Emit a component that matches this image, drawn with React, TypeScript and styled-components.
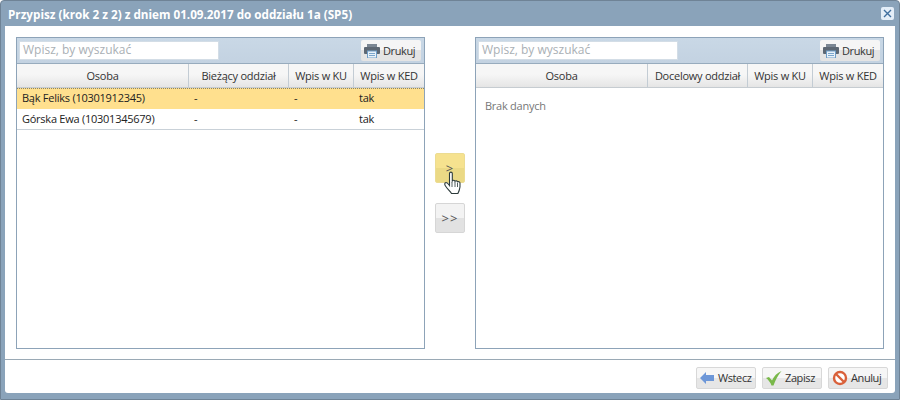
import React from "react";
import styled, { createGlobalStyle } from "styled-components";

const Global = createGlobalStyle`
  html, body { margin: 0; padding: 0; background: #fff; }
  body { font-family: "Open Sans", "Noto Sans", "Liberation Sans", sans-serif; font-size: 11px; letter-spacing: -0.25px; color: #333; }
`;

const Win = styled.div`
  width: 900px; height: 400px; box-sizing: border-box; background: #8aa3ba;
  border: 1px solid #6f8396; border-radius: 4px 4px 0 0;
  display: flex; flex-direction: column; padding: 0 4px 6px 4px;
`;
const TitleBar = styled.div`
  height: 25px; flex: none; display: flex; align-items: center; justify-content: space-between;
  padding: 0 1px 0 3px; color: #fff; font-weight: 700; font-size: 11.7px; letter-spacing: 0;
`;
const CloseBtn = styled.div`
  width: 13px; height: 13px; background: #e4eef8; border-radius: 2px; display: flex;
  align-items: center; justify-content: center;
`;
const Content = styled.div`
  flex: 1; background: #fff; display: flex; flex-direction: column; min-height: 0; border-radius: 0 0 3px 3px;
`;
const Main = styled.div`
  height: 334px; flex: none; box-sizing: border-box; padding: 11px 10px 10px 11px;
  display: flex; border-bottom: 1px solid #9aa9b5;
`;
const Panel = styled.div`
  width: 409px; flex: none; box-sizing: border-box; border: 1px solid #8da3b8; display: flex; flex-direction: column;
`;
const Toolbar = styled.div`
  height: 26px; flex: none; box-sizing: border-box; background: linear-gradient(#c9d8e6, #c3d2e1);
  display: flex; align-items: center; justify-content: space-between; padding: 0 3px 0 2px;
  border-bottom: 1px solid #97abbd;
`;
const Search = styled.div`
  width: 200px; height: 19px; box-sizing: border-box; background: #fff; border: 1px solid #d3dde6;
  color: #aab0b5; font-size: 12px; line-height: 16px; padding-left: 3px; letter-spacing: 0;
`;
const PrintBtn = styled.div`
  width: 60px; height: 21px; box-sizing: border-box; background: linear-gradient(#f5f5f5 50%, #e4e4e4 50%);
  display: flex; align-items: center; gap: 3px; padding-left: 3px; border-radius: 2px; font-size: 11px; letter-spacing: -0.4px; color: #333;
`;
const HeadRow = styled.div`
  height: 24px; flex: none; box-sizing: border-box; display: flex; background: linear-gradient(#f6f6f6 45%, #e5e5e5);
  border-bottom: 1px solid #c6ccd1;
`;
const HeadCell = styled.div<{ $w: number }>`
  width: ${p => p.$w}px; flex: none; box-sizing: border-box; display: flex; align-items: center; justify-content: center;
  border-right: 1px solid #c3ccd4; color: #333;
  &:last-child { border-right: none; flex: 1; }
`;
const Row = styled.div<{ $sel?: boolean }>`
  height: 21px; flex: none; box-sizing: border-box; display: flex; align-items: center; padding-bottom: 2px;
  background: ${p => (p.$sel ? "#ffe08e" : "#fff")};
  border-top: ${p => (p.$sel ? "1px dotted #8a8468" : "none")};
  border-bottom: 1px solid ${p => (p.$sel ? "#ffe08e" : "#c9d1d8")};
  color: #222;
`;
const Cell = styled.div<{ $w: number }>`
  width: ${p => p.$w}px; flex: none; box-sizing: border-box; padding-left: 5px; white-space: nowrap;
`;
const Empty = styled.div`
  padding: 10px 9px; color: #777;
`;
const Middle = styled.div`
  width: 50px; flex: none; display: flex; flex-direction: column; align-items: center; padding-top: 116px; gap: 20px;
`;
const Move = styled.div<{ $hover?: boolean }>`
  position: relative; width: 30px; height: 30px; box-sizing: border-box; border-radius: 2px;
  display: flex; align-items: center; justify-content: center; color: #555; font-size: 13px; letter-spacing: 1px;
  background: ${p => p.$hover
    ? "linear-gradient(#f6e28f 50%, #ebd985 50%)"
    : "linear-gradient(#f3f3f3 50%, #e2e2e2 50%)"};
  border: 1px solid ${p => (p.$hover ? "#ecdc92" : "#d6d6d6")};
`;
const Hand = styled.svg`
  position: absolute; left: 8px; top: 17px;
`;
const Footer = styled.div`
  flex: 1; display: flex; justify-content: flex-end; align-items: center; gap: 6px; padding: 2px 7px 0 0;
`;
const FootBtn = styled.div<{ $w: number }>`
  width: ${p => p.$w}px; height: 22px; box-sizing: border-box; border: 1px solid #d8d8d8; border-radius: 2px;
  background: linear-gradient(#f6f6f6 50%, #e6e6e6 50%); display: flex; align-items: center; gap: 3px; padding-left: 3px;
  color: #333; letter-spacing: -0.4px;
`;

const Printer = () => (
  <svg width="16" height="14" viewBox="0 0 16 14">
    <rect x="3" y="0" width="10" height="3" fill="#7b8794" />
    <rect x="0" y="3" width="16" height="7" rx="1" fill="#5d6874" />
    <rect x="3.5" y="7" width="9" height="7" fill="#e9f1f8" stroke="#6f9ec8" strokeWidth="1" />
    <path d="M5 9.5h6M5 11.5h6" stroke="#7aa6cc" />
  </svg>
);

const cols = [172, 100, 65, 70];

const Left = () => (
  <Panel>
    <Toolbar>
      <Search>Wpisz, by wyszukać</Search>
      <PrintBtn><Printer />Drukuj</PrintBtn>
    </Toolbar>
    <HeadRow>
      <HeadCell $w={cols[0]}>Osoba</HeadCell>
      <HeadCell $w={cols[1]}>Bieżący oddział</HeadCell>
      <HeadCell $w={cols[2]}>Wpis w KU</HeadCell>
      <HeadCell $w={cols[3]}>Wpis w KED</HeadCell>
    </HeadRow>
    <Row $sel>
      <Cell $w={cols[0]}>Bąk Feliks (10301912345)</Cell>
      <Cell $w={cols[1]}>-</Cell>
      <Cell $w={cols[2]}>-</Cell>
      <Cell $w={cols[3]}>tak</Cell>
    </Row>
    <Row>
      <Cell $w={cols[0]}>Górska Ewa (10301345679)</Cell>
      <Cell $w={cols[1]}>-</Cell>
      <Cell $w={cols[2]}>-</Cell>
      <Cell $w={cols[3]}>tak</Cell>
    </Row>
  </Panel>
);

const Right = () => (
  <Panel>
    <Toolbar>
      <Search>Wpisz, by wyszukać</Search>
      <PrintBtn><Printer />Drukuj</PrintBtn>
    </Toolbar>
    <HeadRow>
      <HeadCell $w={cols[0]}>Osoba</HeadCell>
      <HeadCell $w={cols[1]}>Docelowy oddział</HeadCell>
      <HeadCell $w={cols[2]}>Wpis w KU</HeadCell>
      <HeadCell $w={cols[3]}>Wpis w KED</HeadCell>
    </HeadRow>
    <Empty>Brak danych</Empty>
  </Panel>
);

export default function App() {
  return (
    <>
      <Global />
      <Win>
        <TitleBar>
          <span>Przypisz (krok 2 z 2) z dniem 01.09.2017 do oddziału 1a (SP5)</span>
          <CloseBtn>
            <svg width="9" height="9" viewBox="0 0 9 9">
              <path d="M1 1l7 7M8 1l-7 7" stroke="#3f6f9f" strokeWidth="1.4" />
            </svg>
          </CloseBtn>
        </TitleBar>
        <Content>
          <Main>
            <Left />
            <Middle>
              <Move $hover>
                &gt;
                <Hand width="18" height="24" viewBox="0 0 18 24">
                  <path
                    d="M5.500 2.500c0-1.800 2.800-1.800 2.800 0V10c.7-1 2.400-.9 2.700.3.700-.8 2.300-.6 2.600.6.700-.5 2.300-.2 2.400 1.100.2 2.600 0 5-.7 7-.4 1.500-1 2.500-1.400 3.500H7.500C6.200 20.500 3.500 18 1.500 15 .3 13.300.6 11.800 1.800 11.600c1-.2 2.500 1.200 3.700 2.900z"
                    fill="#fff"
                    stroke="#2c3a3a"
                    strokeWidth="1.100"
                  />
                  <path d="M8 11v5M11 11v5M13.500 12v4" stroke="#2c3a3a" strokeWidth="0.8" />
                </Hand>
              </Move>
              <Move>&gt;&gt;</Move>
            </Middle>
            <Right />
          </Main>
          <Footer>
            <FootBtn $w={60}>
              <svg width="15" height="12" viewBox="0 0 15 12">
                <path d="M0 6l6-6v3h8v6H6v3z" fill="#6d97d8" />
              </svg>
              Wstecz
            </FootBtn>
            <FootBtn $w={60}>
              <svg width="16" height="16" viewBox="0 0 16 16">
                <path d="M0 8l3-1 3 3.500C8 6 11 3 15.500 1 12 5 9.500 10 7.500 15.500H5.500C4.500 12.500 2.500 10 0 8z" fill="#79b84a" />
              </svg>
              Zapisz
            </FootBtn>
            <FootBtn $w={60}>
              <svg width="16" height="16" viewBox="0 0 16 16">
                <circle cx="8" cy="8" r="6" fill="#fff" stroke="#d9603a" strokeWidth="2.400" />
                <path d="M4 4l8 8" stroke="#d9603a" strokeWidth="2.400" />
              </svg>
              Anuluj
            </FootBtn>
          </Footer>
        </Content>
      </Win>
    </>
  );
}
